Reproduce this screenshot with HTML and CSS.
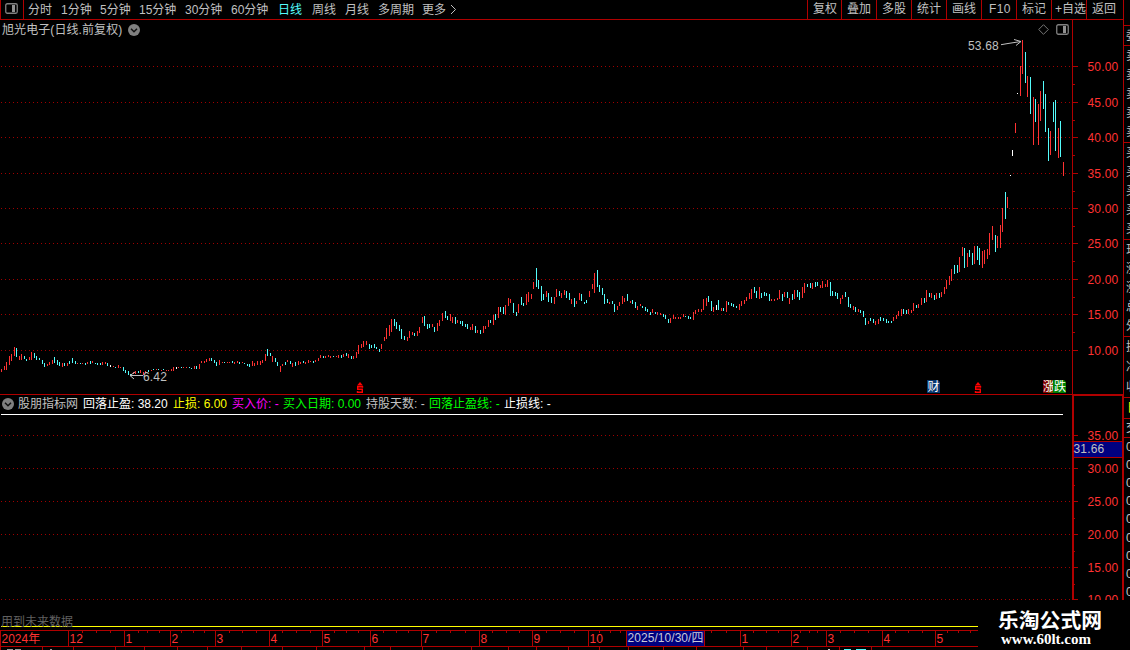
FILE: index.html
```html
<!DOCTYPE html>
<html lang="zh-CN">
<head>
  <meta charset="utf-8">
  <title>旭光电子 日线</title>
  <link rel="stylesheet" href="styles.css">
</head>
<body>
  <div class="app">
    <div class="main">
      <header class="toolbar">
        <span class="layout-btn">
          <svg width="13" height="11" viewBox="0 0 13 11"><rect x="0.75" y="0.75" width="11.5" height="9.5" rx="1.5" fill="none" stroke="#808080" stroke-width="1.3"/><rect x="7" y="2" width="3" height="7" fill="#909090"/></svg>
        </span>
        <nav class="periods">
          <a>分时</a><a>1分钟</a><a>5分钟</a><a>15分钟</a><a>30分钟</a><a>60分钟</a><a class="active">日线</a><a>周线</a><a>月线</a><a>多周期</a><a>更多</a>
          <svg width="8" height="11" viewBox="0 0 8 11"><path d="M1 1L5.5 5.5L1 10" fill="none" stroke="#c0c0c0"/></svg>
        </nav>
        <nav class="tools">
          <a>复权</a><a>叠加</a><a>多股</a><a>统计</a><a>画线</a><a class="key">F10</a><a>标记</a><a class="fav">+自选</a><a>返回</a>
        </nav>
      </header>

      <section class="panel price">
        <div class="plot">
          <svg class="chart" id="price-chart" width="1072" height="374" viewBox="0 20 1072 374"></svg>
          <div class="caption">
            <span>旭光电子(日线.前复权)</span>
            <svg width="12" height="12" viewBox="0 0 12 12"><circle cx="6" cy="6" r="6" fill="#808080"/><path d="M3 4.7L6 7.7L9 4.7" fill="none" stroke="#111" stroke-width="1.5"/></svg>
            <svg class="diamond" width="11" height="11" viewBox="0 0 11 11"><path d="M5.5 0.7L10.3 5.5L5.5 10.3L0.7 5.5Z" fill="none" stroke="#777"/></svg>
            <svg width="13" height="11" viewBox="0 0 13 11"><rect x="0.75" y="0.75" width="11.5" height="9.5" rx="1.5" fill="none" stroke="#808080" stroke-width="1.3"/><rect x="7" y="2" width="3" height="7" fill="#909090"/></svg>
          </div>
        </div>
        <svg class="axis" id="price-axis" width="51" height="374" viewBox="1072 20 51 374"></svg>
      </section>

      <section class="panel indicator">
        <div class="plot">
          <svg class="chart" id="ind-chart" width="1072" height="236" viewBox="0 394 1072 236"></svg>
          <div class="legend">
            <svg width="12" height="12" viewBox="0 0 12 12"><circle cx="6" cy="6" r="6" fill="#808080"/><path d="M3 4.7L6 7.7L9 4.7" fill="none" stroke="#111" stroke-width="1.5"/></svg>
            <span>股朋指标网</span>
            <span class="white">回落止盈: 38.20</span>
            <span class="yellow">止损: 6.00</span>
            <span class="magenta">买入价: -</span>
            <span class="green">买入日期: 0.00</span>
            <span>持股天数: -</span>
            <span class="green">回落止盈线: -</span>
            <span class="white">止损线: -</span>
          </div>
          <div class="notice">用到未来数据</div>
        </div>
        <svg class="axis" id="ind-axis" width="51" height="206" viewBox="1072 394 51 206"></svg>
      </section>

      <footer class="dates">
        <svg id="date-axis" width="978" height="20" viewBox="0 630 978 20"></svg>
      </footer>
    </div>

    <aside class="side">
      <div class="cell gap"></div>
      <div class="cell one"><i>委</i></div>
      <div class="cell five"><i>卖</i><i>卖</i><i>卖</i><i>卖</i><i>卖</i></div>
      <div class="cell five"><i>买</i><i>买</i><i>买</i><i>买</i><i>买</i></div>
      <div class="cell five"><i>现</i><i>涨</i><i>涨</i><i>总</i><i>外</i></div>
      <div class="cell three"><i>换</i><i>净</i><i>收</i></div>
      <div class="cell tab"><i>日</i></div>
      <div class="cell head"><i>交</i></div>
      <div class="cell ticks"><i>0</i><i>0</i><i>0</i><i>0</i><i>0</i><i>0</i><i>0</i><i>0</i><i>0</i></div>
    </aside>

    <div class="watermark">
      <strong>乐淘公式网</strong>
      <span>www.60lt.com</span>
    </div>
  </div>
  <script src="chart.js"></script>
</body>
</html>
```

FILE: styles.css
```css
body {
  margin: 0;
  background: #000;
  color: #c0c0c0;
  font: 12px/14px "Liberation Sans", "Noto Sans CJK SC", sans-serif;
}

svg { display: block; flex: none; }
svg text { font: 12px "Liberation Sans", "Noto Sans CJK SC", sans-serif; }

.app {
  position: relative;
  display: flex;
  width: 1130px;
  height: 650px;
  overflow: hidden;
}
.main { width: 1123px; flex: none; }

/* top bar */
.toolbar {
  display: flex;
  box-sizing: border-box;
  height: 20px;
  border-bottom: 1px solid #b00000;
  white-space: nowrap;
}
.layout-btn {
  box-sizing: border-box;
  width: 24px;
  padding: 3px 0 0 4px;
  border: solid #b00000;
  border-width: 0 1px;
}
.periods {
  display: grid;
  grid-template-columns: 33px 39px 39px 46px 46px 47px 34px 33px 33px 44px 28px 10px;
  align-items: center;
  padding-left: 4px;
}
.periods .active { color: #54fcfc; }
.tools {
  display: grid;
  grid-template-columns: 34px repeat(7, 35px) 37px;
  margin-left: auto;
  line-height: 19px;
}
.tools a { border-left: 1px solid #b00000; padding-left: 5px; }
.tools .key { padding-left: 7px; letter-spacing: 0.4px; }
.tools .fav { padding-left: 3px; }

/* chart panels */
.panel { display: flex; }
.plot { position: relative; width: 1072px; }
.chart text, .axis text { fill: #c0c0c0; letter-spacing: 0.15px; }
.axis .scale { fill: #ff3232; }
.caption {
  position: absolute;
  top: 3px;
  left: 2px;
  right: 3px;
  display: flex;
  align-items: center;
  gap: 6px;
  letter-spacing: 0.08px;
}
.caption svg { margin-bottom: 1px; }
.caption .diamond { margin-left: auto; }
.caption .diamond + svg { margin-left: 1px; }
.legend {
  position: absolute;
  top: 3px;
  left: 2px;
  display: grid;
  grid-template-columns: 16px 65px 90px 59px 51px 83px 63px 75px 60px;
  align-items: center;
  white-space: nowrap;
}
.legend svg { margin-top: -1px; }
.white { color: #fff; }
.yellow { color: #ff0; }
.magenta { color: #f0f; }
.green { color: #0f0; }
.notice { position: absolute; left: 1px; bottom: 1px; color: #606060; }

#date-axis text { fill: #ff3232; }
#date-axis .cursor { fill: #c8c8d8; }

/* clipped quote column */
.side {
  box-sizing: border-box;
  width: 7px;
  height: 600px;
  overflow: hidden;
  border-left: 1px solid #b00000;
}
.cell {
  display: flex;
  flex-direction: column;
  justify-content: space-around;
  box-sizing: border-box;
  padding-left: 2px;
  border-bottom: 1px solid #b00000;
  overflow: hidden;
}
.cell i { font-style: normal; width: 12px; }
.gap { height: 26px; }
.one { height: 20px; }
.five { height: 97px; }
.three { height: 61px; }
.tab { height: 21px; padding-left: 3px; color: #ff0; }
.head { height: 19px; }
.ticks { height: 163px; border: 0; }

.watermark {
  position: absolute;
  right: 0;
  bottom: 0;
  box-sizing: border-box;
  width: 152px;
  height: 50px;
  padding: 7px 0 0 20px;
  background: #000;
  color: #fff;
  white-space: nowrap;
}
.watermark strong {
  display: block;
  font: bold 20.8px/24px "Noto Sans CJK SC", sans-serif;
}
.watermark span {
  display: block;
  padding-left: 3px;
  font: bold 15px/16px "Liberation Serif", serif;
}
```

FILE: chart.js
```js
var LINE = '#b00000';
var COLORS = { u: '#ff3232', d: '#54fcfc', w: '#ffffff' };

// first bar index -> bars as direction + high-low rows
var BARS = {
  0: 'u369-372 u366-370 u362-370 u356-365 u354-361 u347-356 d348-357 u356-360 u354-360 d356-359 d359-361 u357-360 ' +
     'u352-360 d353-358 d356-360 d358-360 d360-364 d363-367 u364-366 u362-365 u360-364 d357-363 d360-365 d362-366 ' +
     'u363-367 d363-366 u363-366 d361-364 d358-363 d361-364 u363-364 d363-364 u363-364 d363-365 u362-364 d361-364 ' +
     'u361-363 d363-364 d363-365 d363-365 u362-365 u362-364 d363-366 w365-367 u366-367 d367-368 u365-368 u367-368 ' +
     'd367-371 d370-373 d371-375 d374-376 u372-374 u371-374 d371-373 u370-373 u372-375 u371-373 d370-372 u370-371 ' +
     'd369-370 u369-370 d369-370 u370-371 d369-370 u370-371 u370-371 u369-371 u367-371 w367-369 u367-368 d367-368 ' +
     'u367-368 u367-368 d367-368 d368-369 u366-369 d366-369 u364-369 u361-363 u361-363 u359-362 u358-361 d358-361 ' +
     'd360-363 d362-366 u360-365 u362-363 d362-363 u362-363 u362-363 d361-363 u362-364 u361-363 d362-364 u362-363 ' +
     'd363-364 d364-366 d364-367 u361-366 u363-366 u361-365 u361-365 u360-363 u354-361 d349-356 d353-356 u356-362 ' +
     'd358-362 d362-366 u366-372 u364-366 d362-365 u360-362 d361-364 u363-367 d362-366 u361-365 u362-364 d361-363 ' +
     'u362-364 u360-363 u361-362 d361-363 u360-362 u358-361 u355-358 d356-358 u356-358 u355-357 u356-358 d356-357 ' +
     'u356-357 u355-358 d355-358 u354-357 d353-356 u354-358 d356-359 u356-359 u352-358 u345-354 u344-348 u341-347 ' +
     'u341-345 d344-349 d345-348 d344-348 d347-349 d349-352',
  150: 'u344-349 u337-341 u328-339 u325-336 u319-332 d319-326 d322-329 d325-331 d329-339 d336-340 u337-341 u331-338 ' +
     'u332-335 d333-336 u331-336 u327-333 u317-323 d316-326 d324-329 d324-328 u324-327 d327-332 u323-331 u320-326 ' +
     'u313-321 d311-318 d316-320 u314-321 u317-323 d317-324 u320-323 d321-324 d321-326 d324-327 d324-329 u327-330 ' +
     'u324-330 d326-333 u330-333 d330-334 u326-333 u326-329 u320-327 d320-323 u315-325 d314-320 u307-318 d307-312 ' +
     'd307-314 u305-315 u298-306 u299-303 d303-313 d312-316 u304-313 d297-305 d303-306 u294-305 u292-302 u294-299 ' +
     'u282-289 d268-287 d280-289 d286-301 d294-300 u291-297 d293-302 d297-303 u297-304 u289-297 d291-296 u293-298 ' +
     'u290-295 d291-298 d293-300 u299-304 d298-307 u301-304 u293-300 d294-301 d302-304 d300-303 u291-297 u284-289 ' +
     'u273-293 d270-287 d285-292 d288-295 d294-304 d299-303 u302-304 d301-304 d304-312 u306-310 u302-306 u296-304 ' +
     'u298-302 d294-301 u301-303 d300-304 d302-308 u306-310 u304-306 d306-308 d307-311 d309-312 d312-315 u309-313 ' +
     'd312-314 u312-315 u313-315 d314-317 d315-319 d319-323 u318-323 u315-319 u317-319 u317-319 u317-319 u314-317 ' +
     'd316-317 d316-319 d317-319 u312-320 u310-314 u309-312 u309-312 u299-310 u298-306 d296-302 d301-311 u307-312 ' +
     'w305-310 d300-310 u308-311 d308-311 u301-312 d302-305 d303-306 d304-307 d306-308 u304-310',
  292: 'u301-306 u300-304 u297-301 u293-299 u289-299 d287-293 d291-298 u287-299 d293-298 d292-296 d293-296 d294-301 ' +
     'u299-301 u299-301 u298-300 u290-299 d294-301 u292-297 d292-298 u298-304 d294-300 u290-299 d290-297 d292-300 ' +
     'u287-298 u283-293 d284-287 d283-288 u283-289 d282-287 d282-286 u285-288 u281-288 u284-287 u280-287 d282-296 ' +
     'd291-296 d292-296 d293-299 u298-304 u295-299 d292-297 d297-307 d304-308 u306-310 d307-312 u309-312 d310-313 ' +
     'd311-317 d318-325 u321-324 d318-321 d319-323 u321-325 u319-324 d317-321 d318-321 d319-323 d321-323 d321-323 ' +
     'u317-321 u315-319 u311-316 u309-316 d309-314 d310-314 u309-314 u310-313 u303-311 d305-308 u304-308 u298-305 ' +
     'd298-303 u290-302 d293-297 u293-298 d295-300 u293-299 d293-298 u292-297 u287-294 u280-289 u276-285 u269-281 ' +
     'd265-274 d265-273 u257-272 u247-256 d248-268 u253-267 d250-257 d253-265 u246-264 d246-260 d248-265 u251-268 ' +
     'u250-264 u249-259 u233-255 u226-240 d235-252 u236-248 u225-248 u208-232 d192-219 u197-208 w175-176 w150-156 ' +
     'u123-133 w93-94 u66-96 u40-74 d52-83 u76-97 d77-114 u97-145 d99-122 u104-145 u91-121 d81-109 d94-132 ' +
     'd128-161 u131-155 d102-122 d100-151 u128-158 d121-157 u162-176'
};

function rect(x, y, w, h, fill) {
  return '<rect x="' + x + '" y="' + y + '" width="' + w + '" height="' + h + '" fill="' + fill + '"/>';
}
function text(x, y, s, cls) {
  return '<text x="' + x + '" y="' + y + '"' + (cls ? ' class="' + cls + '"' : '') + '>' + s + '</text>';
}
function dots(y) {
  return '<path d="M1 ' + (y + 0.5) + 'H1072" stroke="#a00000" stroke-dasharray="1 3"/>';
}
function draw(id, s) {
  document.getElementById(id).innerHTML = s;
}

// price chart
var priceRows = [66, 102, 137, 173, 208, 243, 279, 314, 350];
var out = priceRows.map(dots).join('');
for (var start in BARS) {
  BARS[start].split(' ').forEach(function (b, n) {
    var x = Math.round(1 + 2.5345 * (Number(start) + n));
    var r = b.slice(1).split('-');
    out += rect(x, r[0], 1, r[1] - r[0], COLORS[b[0]]);
  });
}
out += text(968, 50, '53.68') + text(143, 381, '6.42');
out += '<g fill="none" stroke="#c0c0c0"><path d="M1001 44.7L1008 43.5L1021 41.5M1014 39.5L1021 41.5L1016 45.5"/>' +
  '<path d="M130 375.5H143M135 372L130 375.5L134 379"/></g>';

function dividend(x) {
  return '<path d="M' + x + ' 385.5L' + (x + 3) + ' 382L' + (x + 6) + ' 385.5Z" fill="#f00"/>' +
    '<path d="M' + (x + 5.5) + ' 387.7V386.7H' + (x + 0.7) + 'V389.2H' + (x + 5.3) + 'V392.2H' + (x + 0.5) +
    'V391" fill="none" stroke="#f00" stroke-width="1.4"/>';
}
out += dividend(357) + dividend(975);
out += '<path d="M927 380H938L940 382V393H927Z" fill="#083870"/><text x="927.5" y="391" style="fill:#fff">财</text>';
out += rect(1043, 380, 5, 13, '#800000') + rect(1048, 380, 5, 13, '#804000') +
  '<text x="1043" y="391" style="fill:#fff">涨</text>' +
  '<path d="M1053 380H1064L1066 382V393H1053Z" fill="#008000"/><text x="1054" y="391" style="fill:#fff">跌</text>';
draw('price-chart', out);

// price scale
out = rect(1072, 20, 1, 374, LINE);
priceRows.forEach(function (y, i) {
  out += rect(1073, y, 5, 1, LINE) + text(1087.5, y + 5, (50 - i * 5) + '.00', 'scale');
  if (i < 8) out += rect(1073, y + 18, 2, 1, LINE);
});
draw('price-axis', out);

// indicator chart
var indRows = [435, 468, 501, 534, 567, 599];
out = rect(0, 394, 1072, 1, LINE) + indRows.map(dots).join('') +
  rect(1, 414, 1062, 1, '#fff') + rect(1, 626, 977, 1, '#ff0');
draw('ind-chart', out);

out = rect(1072, 394, 2, 206, LINE) + rect(1072, 394, 51, 2, LINE) + rect(1122, 394, 1, 206, LINE);
indRows.forEach(function (y, i) {
  out += rect(1074, y, 4, 1, LINE) + text(1087.5, y + 5, (35 - i * 5) + '.00', 'scale');
  if (i && i < 5) out += rect(1074, y + 17, 1, 1, LINE);
});
out += rect(1074, 441, 48, 17, LINE) + rect(1074, 442, 48, 15, '#000080') + text(1073.5, 453, '31.66');
draw('ind-axis', out);

// dates
var months = [[0, '2024年'], [68, '12'], [124, '1'], [170, '2'], [215, '3'], [269, '4'], [322, '5'], [370, '6'],
  [421, '7'], [479, '8'], [532, '9'], [588, '10'], [740, '1'], [791, '2'], [826, '3'], [882, '4'], [935, '5']];
var weeks = [82, 96, 110, 138, 147, 159, 181, 193, 204, 229, 242, 256, 282, 296, 310, 334, 346, 358, 383, 396, 408,
  436, 450, 465, 492, 506, 519, 546, 560, 574, 599, 610, 620, 711, 726, 753, 766, 778, 800, 809, 817, 840, 854, 868,
  895, 908, 922, 947, 958, 970];
var tabs = [0, 42, 73, 115, 144, 177, 207, 241, 282, 316, 364, 390, 422, 471, 508, 536, 568, 599, 628, 663, 696, 743,
  766, 807, 839, 871];
out = rect(0, 630, 978, 1, LINE) + rect(0, 646, 978, 1, LINE);
months.forEach(function (m) {
  out += rect(m[0], 630, 1, 17, LINE) + text(m[0] + 1.5, 643, m[1]);
});
weeks.forEach(function (x) { out += rect(x, 631, 1, 2, LINE); });
tabs.forEach(function (x) { out += rect(x, 647, 1, 3, LINE); });
out += rect(626, 630, 79, 17, LINE) + rect(627, 631, 77, 15, '#000080') +
  '<text x="627.5" y="642" class="cursor" textLength="76">2025/10/30/四</text>';
out += rect(7, 649, 6, 1, '#999') + rect(15, 649, 6, 1, '#999') + rect(50, 649, 2, 1, '#999') +
  rect(828, 649, 2, 1, '#ccc') + rect(844, 649, 7, 1, '#54fcfc') + rect(856, 649, 10, 1, '#54fcfc');
draw('date-axis', out);
```
